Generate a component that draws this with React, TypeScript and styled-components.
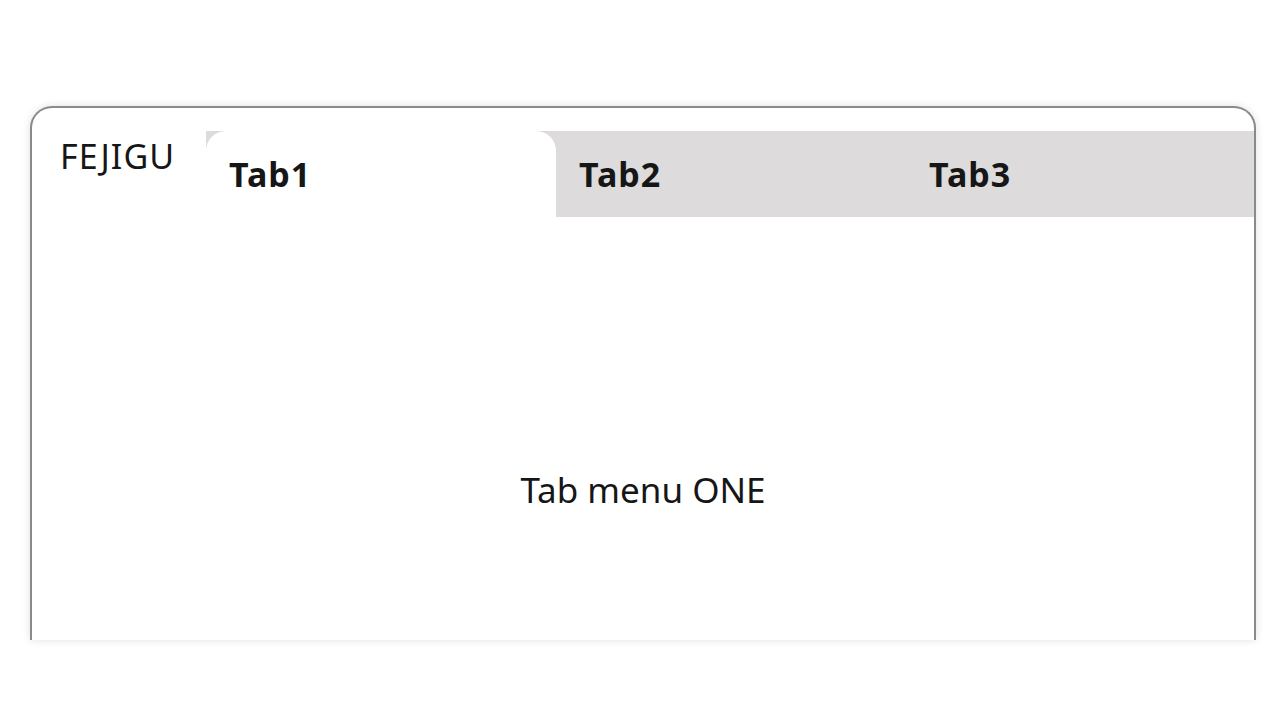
import React, { useState } from "react";
import styled, { createGlobalStyle } from "styled-components";

const Global = createGlobalStyle`
  html, body { margin: 0; padding: 0; background: #ffffff; }
  body { font-family: "Noto Sans", "Open Sans", sans-serif; color: #161616; }
`;

const Page = styled.div`
  width: 1280px;
  height: 720px;
  padding: 106px 24px 0 30px;
  box-sizing: border-box;
  overflow: hidden;
`;

const Card = styled.div`
  width: 1226px;
  height: 534px;
  box-sizing: border-box;
  border: 2px solid #8a8a8a;
  border-bottom: none;
  border-radius: 22px 22px 0 0;
  box-shadow: 0 0 8px rgba(0, 0, 0, 0.12);
  overflow: hidden;
  display: flex;
  flex-direction: column;
  background: #fff;
`;

const Header = styled.div`
  display: flex;
  align-items: flex-start;
  padding-top: 23px;
`;

const Logo = styled.div`
  flex: 0 0 174px;
  padding-left: 28px;
  box-sizing: border-box;
  font-size: 34px;
  line-height: 1;
  padding-top: 8px;
  letter-spacing: 1px;
  font-weight: 400;
  white-space: nowrap;
`;

const TabBar = styled.div`
  display: flex;
  background: #dddbdc;
  height: 86px;
  flex: 0 0 1050px;
`;

const Tab = styled.button<{ $active: boolean }>`
  all: unset;
  box-sizing: border-box;
  flex: 0 0 350px;
  height: 86px;
  padding: 0 0 0 23px;
  display: flex;
  align-items: center;
  font-family: "Noto Sans", sans-serif;
  font-weight: 700;
  font-size: 34px;
  letter-spacing: 1px;
  color: #161616;
  cursor: pointer;
  background: ${(p) => (p.$active ? "#ffffff" : "transparent")};
  border-radius: ${(p) => (p.$active ? "20px 20px 0 0" : "0")};
`;

const Content = styled.div`
  flex: 1;
  display: flex;
  justify-content: center;
  padding-top: 249px;
  font-size: 35px;
`;

const tabs = ["Tab1", "Tab2", "Tab3"];
const contents = ["Tab menu ONE", "Tab menu TWO", "Tab menu THREE"];

export default function App() {
  const [active, setActive] = useState(0);
  return (
    <>
      <Global />
      <Page>
        <Card>
          <Header>
            <Logo>FEJIGU</Logo>
            <TabBar>
              {tabs.map((t, i) => (
                <Tab key={t} $active={i === active} onClick={() => setActive(i)}>
                  {t}
                </Tab>
              ))}
            </TabBar>
          </Header>
          <Content>{contents[active]}</Content>
        </Card>
      </Page>
    </>
  );
}
